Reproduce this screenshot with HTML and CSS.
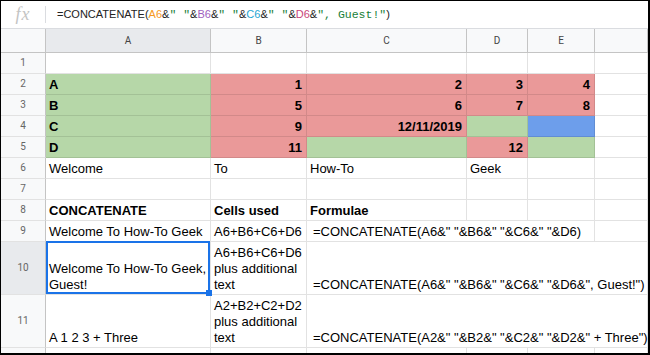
FILE: index.html
```html
<!DOCTYPE html>
<html lang="en">

<head>
  <meta charset="UTF-8" />
  <title>CONCATENATE example</title>
  <link rel="stylesheet" href="styles.css">
</head>

<body>
  <div class="frame">

    <!-- Formula bar -->
    <div class="formula-bar">
      <div class="fx">fx</div>
      <div class="sep"></div>
      <div class="formula">=CONCATENATE(<span class="ref ref-a">A6</span>&amp;<span class="str">" "</span>&amp;<span class="ref ref-b">B6</span>&amp;<span class="str">" "</span>&amp;<span class="ref ref-c">C6</span>&amp;<span class="str">" "</span>&amp;<span class="ref ref-d">D6</span>&amp;<span class="str">", Guest!"</span>)</div>
    </div>

    <!-- Sheet grid -->
    <div class="sheet">
      <div class="hd corner"></div>
      <div class="hd active">A</div>
      <div class="hd">B</div>
      <div class="hd">C</div>
      <div class="hd">D</div>
      <div class="hd">E</div>
      <div class="hd"></div>

      <div class="rn">1</div>
      <div class="c"></div><div class="c"></div><div class="c"></div><div class="c"></div><div class="c"></div><div class="c"></div>

      <div class="rn">2</div>
      <div class="c green bold">A</div>
      <div class="c red bold num">1</div>
      <div class="c red bold num">2</div>
      <div class="c red bold num">3</div>
      <div class="c red bold num">4</div>
      <div class="c"></div>

      <div class="rn">3</div>
      <div class="c green bold">B</div>
      <div class="c red bold num">5</div>
      <div class="c red bold num">6</div>
      <div class="c red bold num">7</div>
      <div class="c red bold num">8</div>
      <div class="c"></div>

      <div class="rn">4</div>
      <div class="c green bold">C</div>
      <div class="c red bold num">9</div>
      <div class="c red bold num">12/11/2019</div>
      <div class="c green"></div>
      <div class="c blue"></div>
      <div class="c"></div>

      <div class="rn">5</div>
      <div class="c green bold">D</div>
      <div class="c red bold num">11</div>
      <div class="c green"></div>
      <div class="c red bold num">12</div>
      <div class="c green"></div>
      <div class="c"></div>

      <div class="rn">6</div>
      <div class="c">Welcome</div>
      <div class="c">To</div>
      <div class="c">How-To</div>
      <div class="c">Geek</div>
      <div class="c"></div>
      <div class="c"></div>

      <div class="rn">7</div>
      <div class="c"></div><div class="c"></div><div class="c"></div><div class="c"></div><div class="c"></div><div class="c"></div>

      <div class="rn">8</div>
      <div class="c bold">CONCATENATE</div>
      <div class="c bold">Cells used</div>
      <div class="c bold">Formulae</div>
      <div class="c"></div>
      <div class="c"></div>
      <div class="c"></div>

      <div class="rn">9</div>
      <div class="c">Welcome To How-To Geek</div>
      <div class="c">A6+B6+C6+D6</div>
      <div class="c span3 indent">=CONCATENATE(A6&amp;" "&amp;B6&amp;" "&amp;C6&amp;" "&amp;D6)</div>
      <div class="c"></div>

      <div class="rn active">10</div>
      <div class="c wrap selected">Welcome To How-To Geek, Guest!</div>
      <div class="c wrap">A6+B6+C6+D6 plus additional text</div>
      <div class="c span4 indent">=CONCATENATE(A6&amp;" "&amp;B6&amp;" "&amp;C6&amp;" "&amp;D6&amp;", Guest!")</div>

      <div class="rn">11</div>
      <div class="c wrap">A 1 2 3 + Three</div>
      <div class="c wrap">A2+B2+C2+D2 plus additional text</div>
      <div class="c span4 indent">=CONCATENATE(A2&amp;" "&amp;B2&amp;" "&amp;C2&amp;" "&amp;D2&amp;" + Three")</div>

      <div class="rn last"></div>
      <div class="c last"></div><div class="c last"></div><div class="c last"></div><div class="c last"></div><div class="c last"></div><div class="c last"></div>
    </div>
  </div>
</body>

</html>
```

FILE: styles.css
```css
:root {
  --grid: #e2e2e2;
  --head-line: #c4c4c4;
  --head-bg: #f8f9fa;
  --head-active: #e8eaed;
  --green: #b6d7a8;
  --red: #ea9999;
  --blue: #6d9eeb;
  --select: #1a73e8;
}

* {
  box-sizing: border-box;
}

html,
body {
  margin: 0;
  padding: 0;
  background: #fff;
}

.frame {
  width: 650px;
  height: 355px;
  border-top: 1px solid #000;
  border-left: 1px solid #000;
  border-right: 2px solid #000;
  border-bottom: 2px solid #000;
  overflow: hidden;
  display: flex;
  flex-direction: column;
}

/* formula bar */

.formula-bar {
  height: 28px;
  flex: none;
  display: flex;
  align-items: center;
  border-bottom: 1px solid #dadce0;
}

.fx {
  width: 44px;
  text-align: center;
  font-family: 'Liberation Serif', serif;
  font-style: italic;
  font-size: 18px;
  color: #c4c4c4;
  letter-spacing: 1px;
}

.sep {
  width: 1px;
  height: 17px;
  background: #dadce0;
}

.formula {
  padding-left: 11px;
  font-family: 'Liberation Sans', Arial, sans-serif;
  font-size: 11px;
  color: #222;
  white-space: nowrap;
}

.str {
  font-family: 'Liberation Mono', monospace;
  font-size: 11.5px;
  color: #188038;
}

.ref-a { color: #f7981d; }
.ref-b { color: #9e5ebf; }
.ref-c { color: #1fa6d3; }
.ref-d { color: #c9467a; }

/* grid */

.sheet {
  flex: 1;
  display: grid;
  grid-template-columns: 45px 165px 96px 160px 61px 67px 1fr;
  grid-template-rows: 24px repeat(9, 21px) 53px 53px 1fr;
  font-family: 'Liberation Sans', Arial, sans-serif;
  font-size: 13px;
  line-height: 16px;
  color: #000;
}

.hd {
  background: var(--head-bg);
  border-right: 1px solid var(--head-line);
  border-bottom: 1px solid var(--head-line);
  display: flex;
  align-items: center;
  justify-content: center;
  font-family: Roboto, sans-serif;
  font-size: 10px;
  color: #444;
}

.hd.active,
.rn.active {
  background: var(--head-active);
}

.rn {
  background: var(--head-bg);
  border-right: 1px solid var(--head-line);
  border-bottom: 1px solid var(--grid);
  display: flex;
  align-items: center;
  justify-content: center;
  font-family: Roboto, sans-serif;
  font-size: 10px;
  color: #666;
}

.c {
  border-right: 1px solid var(--grid);
  border-bottom: 1px solid var(--grid);
  padding: 0 4px 1px 3px;
  display: flex;
  align-items: flex-end;
  white-space: nowrap;
  min-width: 0;
}

.c.last,
.rn.last {
  border-bottom: none;
}

.green {
  background: var(--green);
  border-color: rgba(0, 0, 0, 0.1);
}

.red {
  background: var(--red);
  border-color: rgba(0, 0, 0, 0.1);
}

.blue {
  background: var(--blue);
  border-color: rgba(0, 0, 0, 0.1);
}

.bold {
  font-weight: bold;
}

.num {
  justify-content: flex-end;
}

.wrap {
  white-space: normal;
  padding-right: 0;
}

.span3 {
  grid-column: span 3;
}

.span4 {
  grid-column: span 4;
}

.indent {
  padding-left: 6px;
}

.selected {
  position: relative;
}

.selected::before {
  content: "";
  position: absolute;
  top: -1px;
  left: 0;
  right: 0;
  bottom: 0;
  border: 2px solid var(--select);
}

.selected::after {
  content: "";
  position: absolute;
  right: -2px;
  bottom: -2px;
  width: 6px;
  height: 6px;
  background: var(--select);
  z-index: 2;
}
```
